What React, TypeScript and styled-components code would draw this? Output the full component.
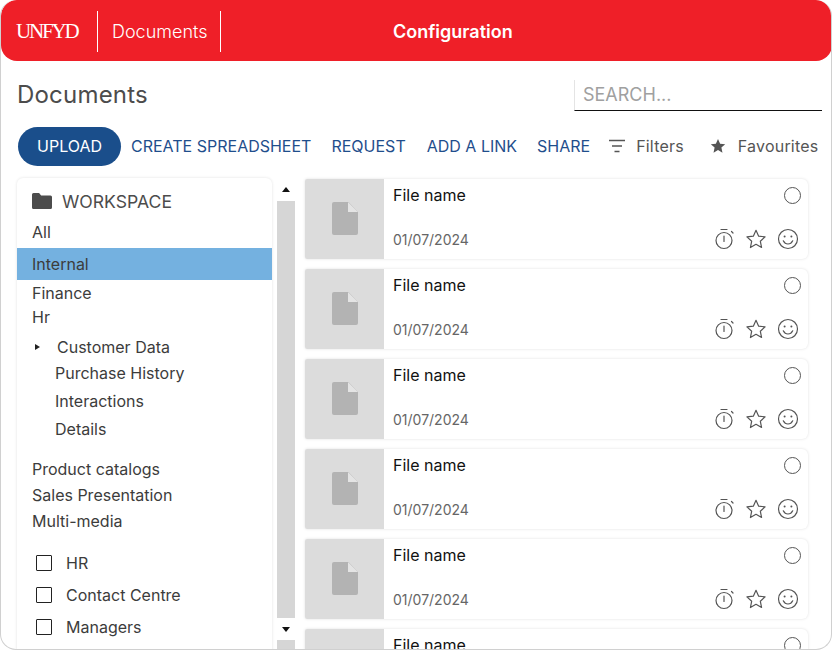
import React from 'react';
import styled, { createGlobalStyle } from 'styled-components';

const GlobalStyle = createGlobalStyle`
  html, body {
    margin: 0;
    padding: 0;
    background: #ffffff;
    font-family: Inter, "Liberation Sans", sans-serif;
  }
  * {
    box-sizing: border-box;
  }
`;

const Frame = styled.div`
  width: 832px;
  height: 650px;
  overflow: hidden;
  background: #ffffff;
  border: 1px solid #d0d0d0;
  border-top: 0;
  border-radius: 16px;
  display: flex;
  flex-direction: column;
`;

const Header = styled.header`
  flex: none;
  height: 61px;
  margin: 0 -1px 0 0;
  padding-top: 11px;
  background: #ef1f28;
  border-radius: 16px;
  color: #ffffff;
  display: grid;
  grid-template-columns: 96px 124px 1fr;
  align-items: start;
`;

const Logo = styled.div`
  padding-left: 15px;
  height: 41px;
  font-family: "Liberation Serif", serif;
  font-size: 21px;
  line-height: 40px;
  letter-spacing: -2.2px;
`;

const Section = styled.div`
  height: 41px;
  border-left: 1px solid #ffffff;
  border-right: 1px solid #ffffff;
  padding-left: 14px;
  font-size: 18px;
  line-height: 42px;
  font-weight: 300;
  white-space: nowrap;
`;

const HeaderTitle = styled.div`
  font-size: 18px;
  font-weight: 600;
  line-height: 42px;
  padding-left: 172px;
`;

const TitleRow = styled.div`
  flex: none;
  height: 49px;
  padding: 18px 9px 0 16px;
  display: flex;
  justify-content: space-between;
  align-items: flex-start;
`;

const PageTitle = styled.h1`
  margin: 0;
  font-size: 24px;
  line-height: 32px;
  font-weight: 400;
  letter-spacing: 0.2px;
  color: #4c4c4c;
`;

const SearchBox = styled.div`
  width: 248px;
  height: 31px;
  margin-top: 1px;
  padding-left: 8px;
  border-left: 1px solid #e4e4e4;
  border-bottom: 1px solid #111111;
  font-size: 18px;
  line-height: 30px;
  color: #a0a0a0;
`;

const Toolbar = styled.div`
  flex: none;
  height: 68px;
  padding: 17px 0 0 17px;
  display: flex;
  align-items: flex-start;
  white-space: nowrap;
`;

const UploadButton = styled.div`
  width: 103px;
  height: 39px;
  margin-right: 10px;
  border-radius: 20px;
  background: #1a4e8b;
  color: #ffffff;
  font-size: 16px;
  line-height: 39px;
  text-align: center;
`;

const ToolbarLink = styled.div<{ $gap: number }>`
  margin-right: ${p => p.$gap}px;
  color: #1f4e8c;
  font-size: 16px;
  line-height: 39px;
  font-weight: 400;
`;

const ToolbarItem = styled.div<{ $gap: number; $iconGap: number }>`
  margin-right: ${p => p.$gap}px;
  height: 38px;
  display: flex;
  align-items: center;
  gap: ${p => p.$iconGap}px;
  color: #555555;
  font-size: 16px;
  letter-spacing: 0.2px;
`;

const Content = styled.div`
  flex: 1;
  min-height: 0;
  padding: 0 0 0 16px;
  display: flex;
  align-items: flex-start;
`;

const Sidebar = styled.aside`
  flex: none;
  width: 255px;
  height: 500px;
  padding-top: 10px;
  background: #ffffff;
  border-radius: 6px;
  box-shadow: 0 0 3px rgba(0, 0, 0, 0.12);
  color: #3c3c3c;
  font-size: 16px;
`;

const WorkspaceTitle = styled.div`
  height: 28px;
  padding: 0 0 2px 15px;
  display: flex;
  align-items: center;
  gap: 10px;
  color: #4c4c4c;
  font-size: 17.6px;
`;

const TreeItem = styled.div<{ $height: number; $active?: boolean; $indent?: number }>`
  height: ${p => p.$height}px;
  line-height: ${p => p.$height}px;
  padding-left: ${p => p.$indent ?? 15}px;
  background: ${p => (p.$active ? '#74b1e0' : 'transparent')};
  display: flex;
  align-items: center;
`;

const Caret = styled.span`
  width: 0;
  height: 0;
  margin-right: 17px;
  border-left: 5px solid #222222;
  border-top: 3.5px solid transparent;
  border-bottom: 3.5px solid transparent;
`;

const Spacer = styled.div<{ $height: number }>`
  height: ${p => p.$height}px;
`;

const CheckRow = styled.label`
  height: 32px;
  padding-left: 19px;
  display: flex;
  align-items: center;
  gap: 14px;
`;

const CheckBox = styled.span`
  width: 16px;
  height: 16px;
  border: 1px solid #222222;
  border-radius: 1px;
`;

const ScrollBar = styled.div`
  flex: none;
  width: 18px;
  margin: 0 10px 0 5px;
  height: 480px;
  display: flex;
  flex-direction: column;
  align-items: center;
`;

const ScrollArrow = styled.div<{ $down?: boolean }>`
  flex: none;
  height: ${p => (p.$down ? 22 : 23)}px;
  display: flex;
  align-items: center;
  justify-content: center;

  &::before {
    content: '';
    border-left: 4.5px solid transparent;
    border-right: 4.5px solid transparent;
    ${p =>
      p.$down
        ? 'border-top: 5px solid #111111;'
        : 'border-bottom: 5px solid #111111;'}
  }
`;

const ScrollTrack = styled.div<{ $height: number }>`
  flex: none;
  width: 18px;
  height: ${p => p.$height}px;
  background: #d6d6d6;
`;

const CardList = styled.div`
  flex: none;
  width: 503px;
  display: flex;
  flex-direction: column;
  gap: 10px;
  margin-top: 1px;
`;

const Card = styled.article`
  flex: none;
  height: 80px;
  display: flex;
  background: #ffffff;
  border-radius: 2px 6px 6px 2px;
  box-shadow: 0 0 3px rgba(0, 0, 0, 0.13);
  overflow: hidden;
`;

const Thumb = styled.div`
  flex: none;
  width: 79px;
  padding-bottom: 2px;
  background: #dcdcdc;
  display: flex;
  align-items: center;
  justify-content: center;
`;

const CardBody = styled.div`
  flex: 1;
  padding: 6px 9px 0 9px;
  display: grid;
  grid-template-columns: 1fr auto;
  grid-template-rows: 43px 1fr;
`;

const FileName = styled.div`
  font-size: 16px;
  line-height: 20px;
  font-weight: 400;
  color: #111111;
`;

const SelectCircle = styled.span`
  width: 17px;
  height: 17px;
  margin: 2px -2px 0 0;
  justify-self: end;
  border: 1px solid #555555;
  border-radius: 50%;
`;

const FileDate = styled.div`
  font-size: 14px;
  line-height: 24px;
  color: #666666;
`;

const CardActions = styled.div`
  display: flex;
  align-items: flex-start;
  gap: 10px;
  color: #555555;
`;

const FilterIcon = () => (
  <svg width="17" height="14" viewBox="0 0 17 14" fill="none" stroke="#555555" strokeWidth="1.4">
    <path d="M1 1.5h16M4 7h10M6.5 12.5h5" />
  </svg>
);

const SolidStar = () => (
  <svg width="16" height="16" viewBox="0 0 24 24" fill="#555555">
    <path d="M12 1.5l3.2 7 7.6.8-5.7 5.1 1.6 7.6L12 18.1 5.3 22l1.6-7.6L1.2 9.3l7.6-.8z" />
  </svg>
);

const FolderIcon = () => (
  <svg width="20" height="16" viewBox="0 0 20 16" fill="#4c4c4c">
    <path d="M1.5 0h5.6l2 2.4h9.4A1.5 1.5 0 0 1 20 3.9v10.6a1.5 1.5 0 0 1-1.5 1.5h-17A1.5 1.5 0 0 1 0 14.5v-13A1.5 1.5 0 0 1 1.5 0z" />
  </svg>
);

const FileIcon = () => (
  <svg width="26" height="33" viewBox="0 0 26 33">
    <path d="M2 0h14.5L26 10v21a2 2 0 0 1-2 2H2a2 2 0 0 1-2-2V2a2 2 0 0 1 2-2z" fill="#b3b3b3" />
    <path d="M16 0l10 10H16z" fill="#e4e4e4" />
  </svg>
);

const TimerIcon = () => (
  <svg width="22" height="22" viewBox="0 0 22 22" fill="none" stroke="#555555" strokeWidth="1.2">
    <circle cx="11" cy="12.5" r="8" />
    <path d="M8 1.5h6M11 8v5.5M18.5 3.5l1.5 1.5" strokeLinecap="round" />
  </svg>
);

const OutlineStar = () => (
  <svg width="22" height="22" viewBox="0 0 24 24" fill="none" stroke="#555555" strokeWidth="1.3" strokeLinejoin="round">
    <path d="M12 2.5l2.9 6.4 7 .8-5.2 4.7 1.4 6.9-6.1-3.5-6.1 3.5 1.4-6.9-5.2-4.7 7-.8z" />
  </svg>
);

const SmileIcon = () => (
  <svg width="22" height="22" viewBox="0 0 22 22" fill="none" stroke="#555555" strokeWidth="1.2">
    <circle cx="11" cy="11" r="9.5" />
    <circle cx="7.6" cy="8.6" r="1" fill="#555555" stroke="none" />
    <circle cx="14.4" cy="8.6" r="1" fill="#555555" stroke="none" />
    <path d="M6.3 12.8c1 2.2 2.7 3.2 4.7 3.2s3.7-1 4.7-3.2" strokeLinecap="round" />
  </svg>
);

const files = [0, 1, 2, 3, 4, 5];

export default function App() {
  return (
    <>
      <GlobalStyle />
      <Frame>
        <Header>
          <Logo>UNFYD</Logo>
          <Section>Documents</Section>
          <HeaderTitle>Configuration</HeaderTitle>
        </Header>
        <TitleRow>
          <PageTitle>Documents</PageTitle>
          <SearchBox>SEARCH...</SearchBox>
        </TitleRow>
        <Toolbar>
          <UploadButton>UPLOAD</UploadButton>
          <ToolbarLink $gap={20}>CREATE SPREADSHEET</ToolbarLink>
          <ToolbarLink $gap={21}>REQUEST</ToolbarLink>
          <ToolbarLink $gap={20}>ADD A LINK</ToolbarLink>
          <ToolbarLink $gap={18}>SHARE</ToolbarLink>
          <ToolbarItem $gap={26} $iconGap={11}>
            <FilterIcon />
            Filters
          </ToolbarItem>
          <ToolbarItem $gap={0} $iconGap={12}>
            <SolidStar />
            Favourites
          </ToolbarItem>
        </Toolbar>
        <Content>
          <Sidebar>
            <WorkspaceTitle>
              <FolderIcon />
              WORKSPACE
            </WorkspaceTitle>
            <TreeItem $height={32}>All</TreeItem>
            <TreeItem $height={32} $active>Internal</TreeItem>
            <TreeItem $height={26}>Finance</TreeItem>
            <TreeItem $height={22}>Hr</TreeItem>
            <Spacer $height={5} />
            <TreeItem $height={28} $indent={18}>
              <Caret />
              Customer Data
            </TreeItem>
            <TreeItem $height={24} $indent={38}>Purchase History</TreeItem>
            <TreeItem $height={32} $indent={38}>Interactions</TreeItem>
            <TreeItem $height={24} $indent={38}>Details</TreeItem>
            <Spacer $height={15} />
            <TreeItem $height={26}>Product catalogs</TreeItem>
            <TreeItem $height={26}>Sales Presentation</TreeItem>
            <TreeItem $height={26}>Multi-media</TreeItem>
            <Spacer $height={13} />
            <CheckRow><CheckBox />HR</CheckRow>
            <CheckRow><CheckBox />Contact Centre</CheckRow>
            <CheckRow><CheckBox />Managers</CheckRow>
          </Sidebar>
          <ScrollBar>
            <ScrollArrow />
            <ScrollTrack $height={417} />
            <ScrollArrow $down />
            <ScrollTrack $height={20} />
          </ScrollBar>
          <CardList>
            {files.map(id => (
              <Card key={id}>
                <Thumb>
                  <FileIcon />
                </Thumb>
                <CardBody>
                  <FileName>File name</FileName>
                  <SelectCircle />
                  <FileDate>01/07/2024</FileDate>
                  <CardActions>
                    <TimerIcon />
                    <OutlineStar />
                    <SmileIcon />
                  </CardActions>
                </CardBody>
              </Card>
            ))}
          </CardList>
        </Content>
      </Frame>
    </>
  );
}
